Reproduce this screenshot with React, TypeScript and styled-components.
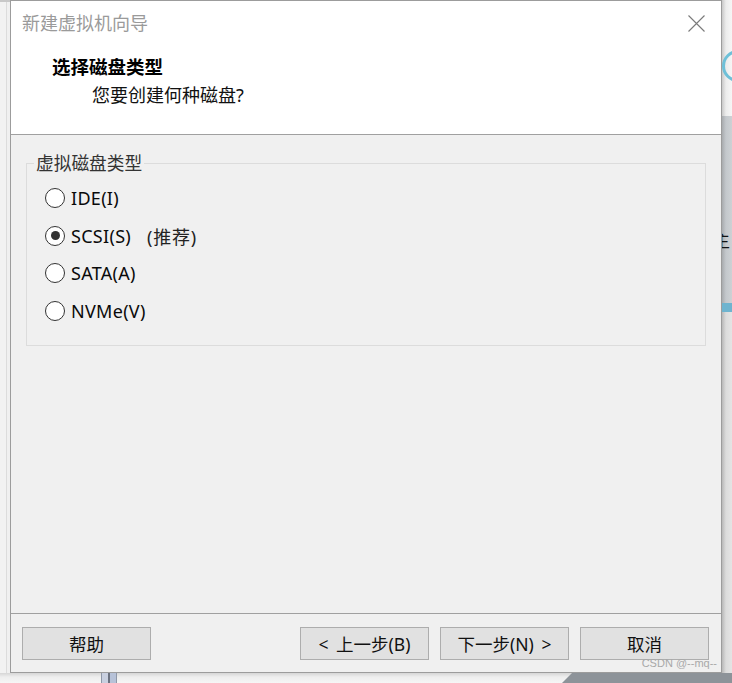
import React from 'react';
import styled, {createGlobalStyle} from "styled-components";

const GlobalStyle = createGlobalStyle`
    html, body {
        margin: 0;
        padding: 0;
        background: #f0f0f0;
    }
    * {
        box-sizing: border-box;
    }
`

const FONT = `"Noto Sans", "Noto Sans CJK SC", sans-serif`

const options = [
    {id: 'ide', label: 'IDE(I)', checked: false},
    {id: 'scsi', label: 'SCSI(S)', hint: '(推荐)', checked: true},
    {id: 'sata', label: 'SATA(A)', checked: false},
    {id: 'nvme', label: 'NVMe(V)', checked: false},
];

const CloseIcon = () => (
    <svg width="17" height="17" viewBox="0 0 17 17">
        <path d="M0.5 0.5 L16.5 16.5 M16.5 0.5 L0.5 16.5" stroke="#7a7a7a" strokeWidth="1.1" fill="none"/>
    </svg>
);

export default function App() {
    return (
        <Desktop>
            <GlobalStyle/>
            <LeftStrip/>
            <Dialog>
                <Header>
                    <TitleRow>
                        <WindowTitle>新建虚拟机向导</WindowTitle>
                        <CloseButton><CloseIcon/></CloseButton>
                    </TitleRow>
                    <Heading>选择磁盘类型</Heading>
                    <SubHeading>您要创建何种磁盘?</SubHeading>
                </Header>
                <Body>
                    <GroupBox>
                        <Legend>虚拟磁盘类型</Legend>
                        <OptionList>
                            {options.map(o => (
                                <OptionRow key={o.id}>
                                    <Radio $checked={o.checked}/>
                                    <OptionLabel>{o.label}</OptionLabel>
                                    {o.hint && <Hint>{o.hint}</Hint>}
                                </OptionRow>
                            ))}
                        </OptionList>
                    </GroupBox>
                </Body>
                <Footer>
                    <Button>帮助</Button>
                    <Spacer/>
                    <Button>&lt;&nbsp;上一步(B)</Button>
                    <Button>下一步(N)&nbsp;&gt;</Button>
                    <Button>取消</Button>
                    <Watermark>CSDN @--mq--</Watermark>
                </Footer>
            </Dialog>
            <RightStrip>
                <RightTop>
                    <svg width="10" height="34" viewBox="0 0 10 34">
                        <circle cx="16" cy="17" r="14.5" stroke="#6ec0d8" strokeWidth="3" fill="none"/>
                    </svg>
                </RightTop>
                <RightMid>
                    <CutText>主</CutText>
                </RightMid>
                <BlueBand/>
                <RightBottom/>
            </RightStrip>
            <BottomStrip>
                <Pillar/>
                <DarkCorner/>
            </BottomStrip>
        </Desktop>
    );
}

const Desktop = styled.div`
    width: 732px;
    height: 683px;
    overflow: hidden;
    display: grid;
    grid-template-columns: 10px 712px 10px;
    grid-template-rows: 673px 10px;
    background: #f0f0f0;
    font-family: ${FONT};
`

const LeftStrip = styled.div`
    background: linear-gradient(to right, #f2f2f2 0, #f2f2f2 6px, #dcdcdc 6px, #dcdcdc 7px, #f0f0f0 7px);
    border-top: 2px solid #c8c8c8;
`

const Dialog = styled.div`
    position: relative;
    display: flex;
    flex-direction: column;
    border: 1px solid #9c9c9c;
    background: #f0f0f0;
`

const Header = styled.div`
    height: 134px;
    background: #ffffff;
    border-bottom: 1px solid #a0a0a0;
    padding: 9px 16px 0 11px;
`

const TitleRow = styled.div`
    display: flex;
    align-items: center;
    justify-content: space-between;
    height: 24px;
`

const WindowTitle = styled.span`
    font-size: 18px;
    color: #9a9a9a;
`

const CloseButton = styled.span`
    display: flex;
    width: 17px;
    height: 17px;
    margin-top: 2px;
`

const Heading = styled.div`
    margin: 21px 0 0 30px;
    font-size: 18.5px;
    font-weight: 700;
    line-height: 24px;
    color: #000;
`

const SubHeading = styled.div`
    margin: 4px 0 0 70px;
    font-size: 18px;
    line-height: 24px;
    color: #111;
`

const Body = styled.div`
    flex: 1;
    padding: 18px 15px 0 15px;
`

const GroupBox = styled.fieldset`
    margin: 0;
    height: 193px;
    padding: 0 0 0 7px;
    border: 1px solid #dcdcdc;
`

const Legend = styled.legend`
    padding: 0 2px;
    font-size: 17.7px;
    line-height: 20px;
    color: #333;
`

const OptionList = styled.div`
    display: flex;
    flex-direction: column;
    gap: 17.7px;
    padding: 15px 0 0 11px;
`

const OptionRow = styled.div`
    display: flex;
    align-items: center;
    height: 20px;
`

const Radio = styled.span<{ $checked: boolean }>`
    position: relative;
    width: 20px;
    height: 20px;
    border-radius: 50%;
    border: 1.3px solid #333;
    background: #fff;
    flex-shrink: 0;

    &::after {
        content: "";
        display: ${p => p.$checked ? 'block' : 'none'};
        position: absolute;
        left: 50%;
        top: 50%;
        width: 9px;
        height: 9px;
        margin: -4.5px 0 0 -4.5px;
        border-radius: 50%;
        background: #333;
    }
`

const OptionLabel = styled.span`
    margin-left: 6px;
    font-size: 18px;
    letter-spacing: 0.3px;
    color: #0a0a0a;
`

const Hint = styled.span`
    margin-left: 16px;
    font-size: 18px;
    letter-spacing: 0.8px;
    color: #222;
`

const Footer = styled.div`
    display: flex;
    align-items: center;
    border-top: 1px solid #a0a0a0;
    padding: 13px 12px 12px 11px;
    gap: 11px;
`

const Spacer = styled.div`
    flex: 1;
`

const Button = styled.button`
    width: 129px;
    height: 33px;
    padding: 0;
    border: 1px solid #adadad;
    background: #e1e1e1;
    font-family: ${FONT};
    font-size: 17.5px;
    word-spacing: 3px;
    color: #111;
`

const Watermark = styled.span`
    position: absolute;
    right: 4px;
    bottom: 3px;
    font-family: "Liberation Sans", Arial, sans-serif;
    font-size: 11px;
    color: #a8a8a8;
`

const RightStrip = styled.div`
    display: flex;
    flex-direction: column;
    overflow: hidden;
`

const RightTop = styled.div`
    height: 116px;
    padding-top: 49px;
    background: linear-gradient(to right, #c8c8c8, #ececec 4px, #f6f6f6);
`

const RightMid = styled.div`
    height: 187px;
    padding-top: 113px;
    background: linear-gradient(to right, #a8abae, #c4c8cc 4px, #cdd1d4);
    overflow: hidden;
`

const CutText = styled.span`
    display: block;
    margin-left: -9px;
    white-space: nowrap;
    font-family: "Noto Sans CJK SC", sans-serif;
    font-size: 17px;
    line-height: 22px;
    color: #111;
`

const BlueBand = styled.div`
    height: 9px;
    background: #6fb4cf;
`

const RightBottom = styled.div`
    flex: 1;
    background: linear-gradient(to right, #b8b8b8, #dcdcdc 4px, #e4e4e4);
`

const BottomStrip = styled.div`
    grid-column: 1 / 4;
    display: flex;
    background: linear-gradient(to bottom, #d6d6d6, #eeeeee 4px, #f6f6f6);
`

const Pillar = styled.div`
    width: 16px;
    margin-left: 101px;
    border-left: 1px solid #8f98a8;
    border-right: 1px solid #8f98a8;
    background: linear-gradient(to right, #c9d0e0 45%, #6b7280 45%, #6b7280 55%, #b7c2d8 55%);
`

const DarkCorner = styled.div`
    margin-left: auto;
    width: 170px;
    background: #8d9399;
    clip-path: polygon(10px 0, 100% 0, 100% 100%, 0 100%);
`
